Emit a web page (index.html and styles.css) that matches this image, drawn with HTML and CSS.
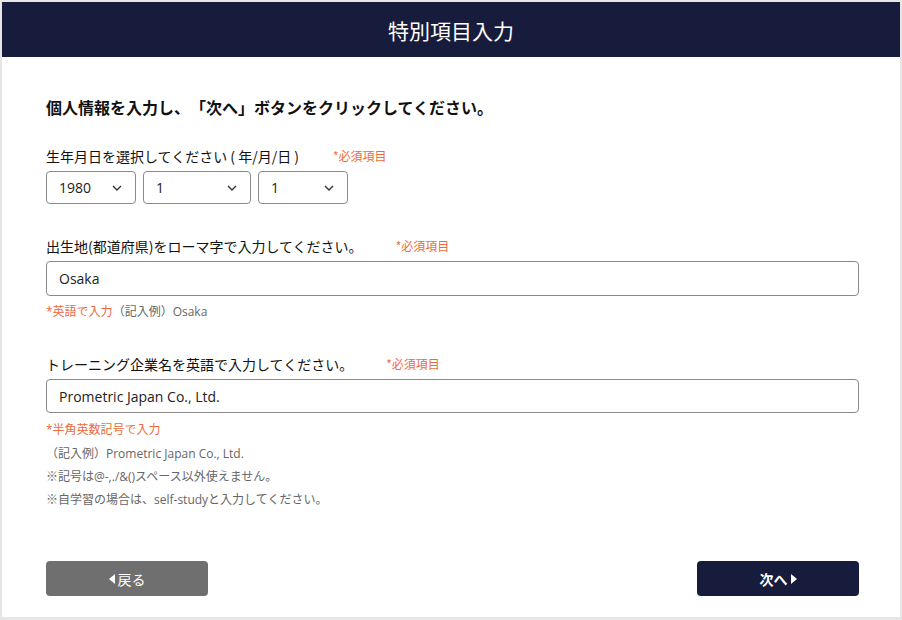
FILE: index.html
```html
<!DOCTYPE html>
<html lang="ja">
<head>
<meta charset="utf-8">
<title>特別項目入力</title>
<link rel="stylesheet" href="styles.css">
</head>
<body>
<div class="panel">
  <header class="header">特別項目入力</header>
  <main class="content">
    <h1 class="lead">個人情報を入力し、「次へ」ボタンをクリックしてください。</h1>

    <div class="label">生年月日を選択してください ( 年/月/日 )<span class="req req-1">*必須項目</span></div>
    <div class="selects">
      <div class="select select-year"><span>1980</span><svg class="chev" width="10" height="6" viewBox="0 0 10 6"><path d="M1 1l4 4 4-4" fill="none" stroke="#333" stroke-width="1.4"/></svg></div>
      <div class="select select-month"><span>1</span><svg class="chev" width="10" height="6" viewBox="0 0 10 6"><path d="M1 1l4 4 4-4" fill="none" stroke="#333" stroke-width="1.4"/></svg></div>
      <div class="select select-day"><span>1</span><svg class="chev" width="10" height="6" viewBox="0 0 10 6"><path d="M1 1l4 4 4-4" fill="none" stroke="#333" stroke-width="1.4"/></svg></div>
    </div>

    <div class="label label-2">出生地(都道府県)をローマ字で入力してください。<span class="req req-2">*必須項目</span></div>
    <div class="input input-tall">Osaka</div>
    <div class="help help-first"><span class="orange">*英語で入力</span>（記入例）Osaka</div>

    <div class="label label-3">トレーニング企業名を英語で入力してください。<span class="req req-3">*必須項目</span></div>
    <div class="input">Prometric Japan Co., Ltd.</div>
    <div class="notes">
      <div class="help help-first orange">*半角英数記号で入力</div>
      <div class="help help-line">（記入例）Prometric Japan Co., Ltd.</div>
      <div class="help help-line">※記号は@-,./&amp;()スペース以外使えません。</div>
      <div class="help help-line">※自学習の場合は、self-studyと入力してください。</div>
    </div>

    <div class="buttons">
      <div class="btn btn-back"><svg width="6" height="10" viewBox="0 0 6 10"><path d="M6 0v10L0 5z" fill="#fff"/></svg>戻る</div>
      <div class="btn btn-next">次へ<svg width="6" height="10" viewBox="0 0 6 10"><path d="M0 0v10l6-5z" fill="#fff"/></svg></div>
    </div>
  </main>
</div>
</body>
</html>
```

FILE: styles.css
```css
* { box-sizing: border-box; }
html, body {
  margin: 0;
  padding: 0;
  background: #e6e6e6;
}
body {
  font-family: "Open Sans", "Noto Sans CJK JP", sans-serif;
  color: #111;
  width: 902px;
  height: 620px;
  overflow: hidden;
  text-spacing-trim: space-all;
}
.panel {
  margin: 2px 2px 0 2px;
  width: 898px;
  height: 615px;
  background: #fff;
  display: flex;
  flex-direction: column;
}
.header {
  height: 55px;
  background: #181c3c;
  color: #fff;
  font-family: "Noto Sans CJK JP", sans-serif;
  font-size: 21px;
  display: flex;
  align-items: center;
  justify-content: center;
  padding-top: 1px;
}
.content {
  padding: 38px 41px 0 44px;
  display: flex;
  flex-direction: column;
}
.lead {
  margin: 0 0 27px 0;
  font-family: "Noto Sans CJK JP", sans-serif;
  font-size: 16px;
  font-weight: 700;
  line-height: 24px;
  color: #111;
}
.label {
  font-family: "Noto Sans CJK JP", sans-serif;
  font-size: 14px;
  line-height: 20px;
  margin-bottom: 5px;
  color: #111;
  display: flex;
  align-items: center;
  white-space: pre;
}
.label-2 { margin-top: 32px; }
.label-3 { margin-top: 32px; }
.req {
  font-size: 12px;
  color: #ee6a3c;
}
.req-1 { margin-left: 34px; }
.req-2 { margin-left: 33px; }
.req-3 { margin-left: 33px; }
.selects {
  display: flex;
  gap: 7px;
}
.select {
  height: 33px;
  border: 1px solid #8a8a8a;
  border-radius: 4px;
  display: flex;
  align-items: center;
  justify-content: space-between;
  padding: 0 13px 0 12px;
  font-size: 14px;
  color: #222;
}
.select-year { width: 90px; }
.select-month { width: 108px; }
.select-day { width: 90px; }
.chev { display: block; }
.input {
  height: 34px;
  border: 1px solid #8a8a8a;
  border-radius: 4px;
  padding: 0 12px;
  display: flex;
  align-items: center;
  font-size: 14px;
  color: #222;
}
.input-tall { height: 35px; }
.help {
  font-size: 12px;
  line-height: 20px;
  color: #666;
}
.help-first { margin-top: 6px; }
.notes .help-first { margin-top: 7px; margin-bottom: 2px; }
.help-line { line-height: 23px; }
.orange { color: #ee6a3c; }
.buttons {
  margin-top: 50px;
  display: flex;
  justify-content: space-between;
}
.btn {
  width: 162px;
  height: 35px;
  border-radius: 4px;
  color: #fff;
  font-family: "Noto Sans CJK JP", sans-serif;
  font-size: 14px;
  display: flex;
  align-items: center;
  justify-content: center;
  gap: 3px;
}
.btn-back { background: #6f6f6f; }
.btn-next {
  background: #181c3c;
  font-weight: 700;
}
```
